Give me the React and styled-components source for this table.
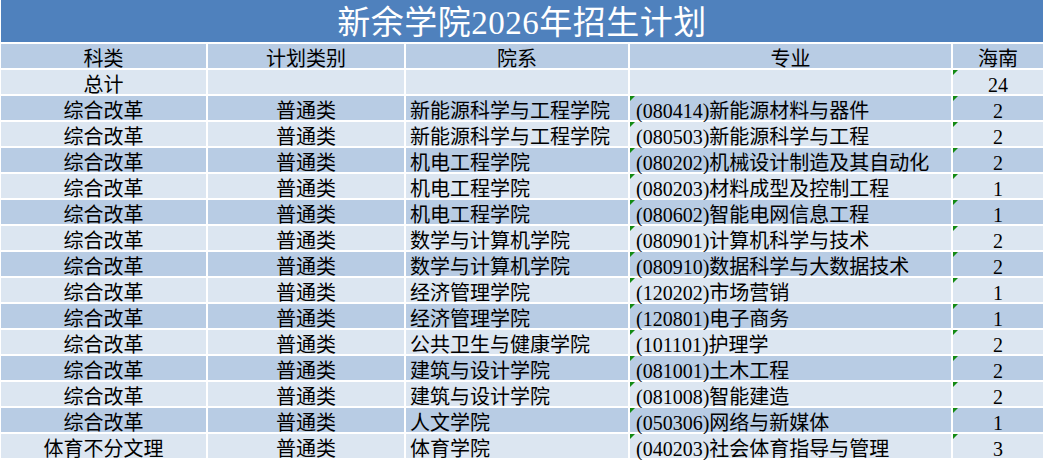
import styled, { createGlobalStyle } from "styled-components";

const GlobalStyle = createGlobalStyle`
  body {
    margin: 0;
    background: #ffffff;
    font-family: "Liberation Serif", "Noto Sans CJK SC", serif;
  }
`;

const Sheet = styled.div`
  width: 1043px;
  height: 460px;
  overflow: hidden;
  background: #ffffff;
  padding-left: 1px;
  box-sizing: border-box;
`;

const Title = styled.div`
  height: 42px;
  box-sizing: border-box;
  padding-top: 3px;
  background: #4f81bd;
  color: #ffffff;
  font-size: 33px;
  line-height: 40px;
  text-align: center;
  letter-spacing: 0.5px;
`;

const Grid = styled.div`
  margin-top: 2px;
  display: grid;
  grid-template-columns: 205px 196px 222px 321px 1fr;
  grid-auto-rows: 24px;
  column-gap: 2px;
  row-gap: 2px;
`;

const Cell = styled.div`
  position: relative;
  box-sizing: border-box;
  background: ${(p) => (p.$dark ? "#b8cce4" : "#dce6f1")};
  color: #000000;
  font-size: 20px;
  line-height: 24px;
  padding-top: 3px;
  white-space: nowrap;
  overflow: visible;
  text-align: ${(p) => (p.$pad ? "left" : "center")};
  padding-left: ${(p) => p.$pad || 0}px;

  &::before {
    content: "";
    display: ${(p) => (p.$flag ? "block" : "none")};
    position: absolute;
    left: 0;
    top: 0;
    width: 0;
    height: 0;
    border-top: 5px solid #138a13;
    border-right: 5px solid transparent;
  }
`;

const rows = [
  ["综合改革", "普通类", "新能源科学与工程学院", "(080414)新能源材料与器件", "2"],
  ["综合改革", "普通类", "新能源科学与工程学院", "(080503)新能源科学与工程", "2"],
  ["综合改革", "普通类", "机电工程学院", "(080202)机械设计制造及其自动化", "2"],
  ["综合改革", "普通类", "机电工程学院", "(080203)材料成型及控制工程", "1"],
  ["综合改革", "普通类", "机电工程学院", "(080602)智能电网信息工程", "1"],
  ["综合改革", "普通类", "数学与计算机学院", "(080901)计算机科学与技术", "2"],
  ["综合改革", "普通类", "数学与计算机学院", "(080910)数据科学与大数据技术", "2"],
  ["综合改革", "普通类", "经济管理学院", "(120202)市场营销", "1"],
  ["综合改革", "普通类", "经济管理学院", "(120801)电子商务", "1"],
  ["综合改革", "普通类", "公共卫生与健康学院", "(101101)护理学", "2"],
  ["综合改革", "普通类", "建筑与设计学院", "(081001)土木工程", "2"],
  ["综合改革", "普通类", "建筑与设计学院", "(081008)智能建造", "2"],
  ["综合改革", "普通类", "人文学院", "(050306)网络与新媒体", "1"],
  ["体育不分文理", "普通类", "体育学院", "(040203)社会体育指导与管理", "3"],
];

function App() {
  return (
    <>
      <GlobalStyle />
      <Sheet>
        <Title>新余学院2026年招生计划</Title>
        <Grid>
          <Cell $dark>科类</Cell>
          <Cell $dark>计划类别</Cell>
          <Cell $dark>院系</Cell>
          <Cell $dark>专业</Cell>
          <Cell $dark>海南</Cell>

          <Cell>总计</Cell>
          <Cell />
          <Cell />
          <Cell />
          <Cell $flag>24</Cell>

          {rows.map((r, i) => {
            const dark = i % 2 === 0;
            return [
              <Cell key={i + "a"} $dark={dark}>{r[0]}</Cell>,
              <Cell key={i + "b"} $dark={dark}>{r[1]}</Cell>,
              <Cell key={i + "c"} $dark={dark} $pad={4}>{r[2]}</Cell>,
              <Cell key={i + "d"} $dark={dark} $pad={6} $flag>{r[3]}</Cell>,
              <Cell key={i + "e"} $dark={dark} $flag>{r[4]}</Cell>,
            ];
          })}
        </Grid>
      </Sheet>
    </>
  );
}

export default App;
